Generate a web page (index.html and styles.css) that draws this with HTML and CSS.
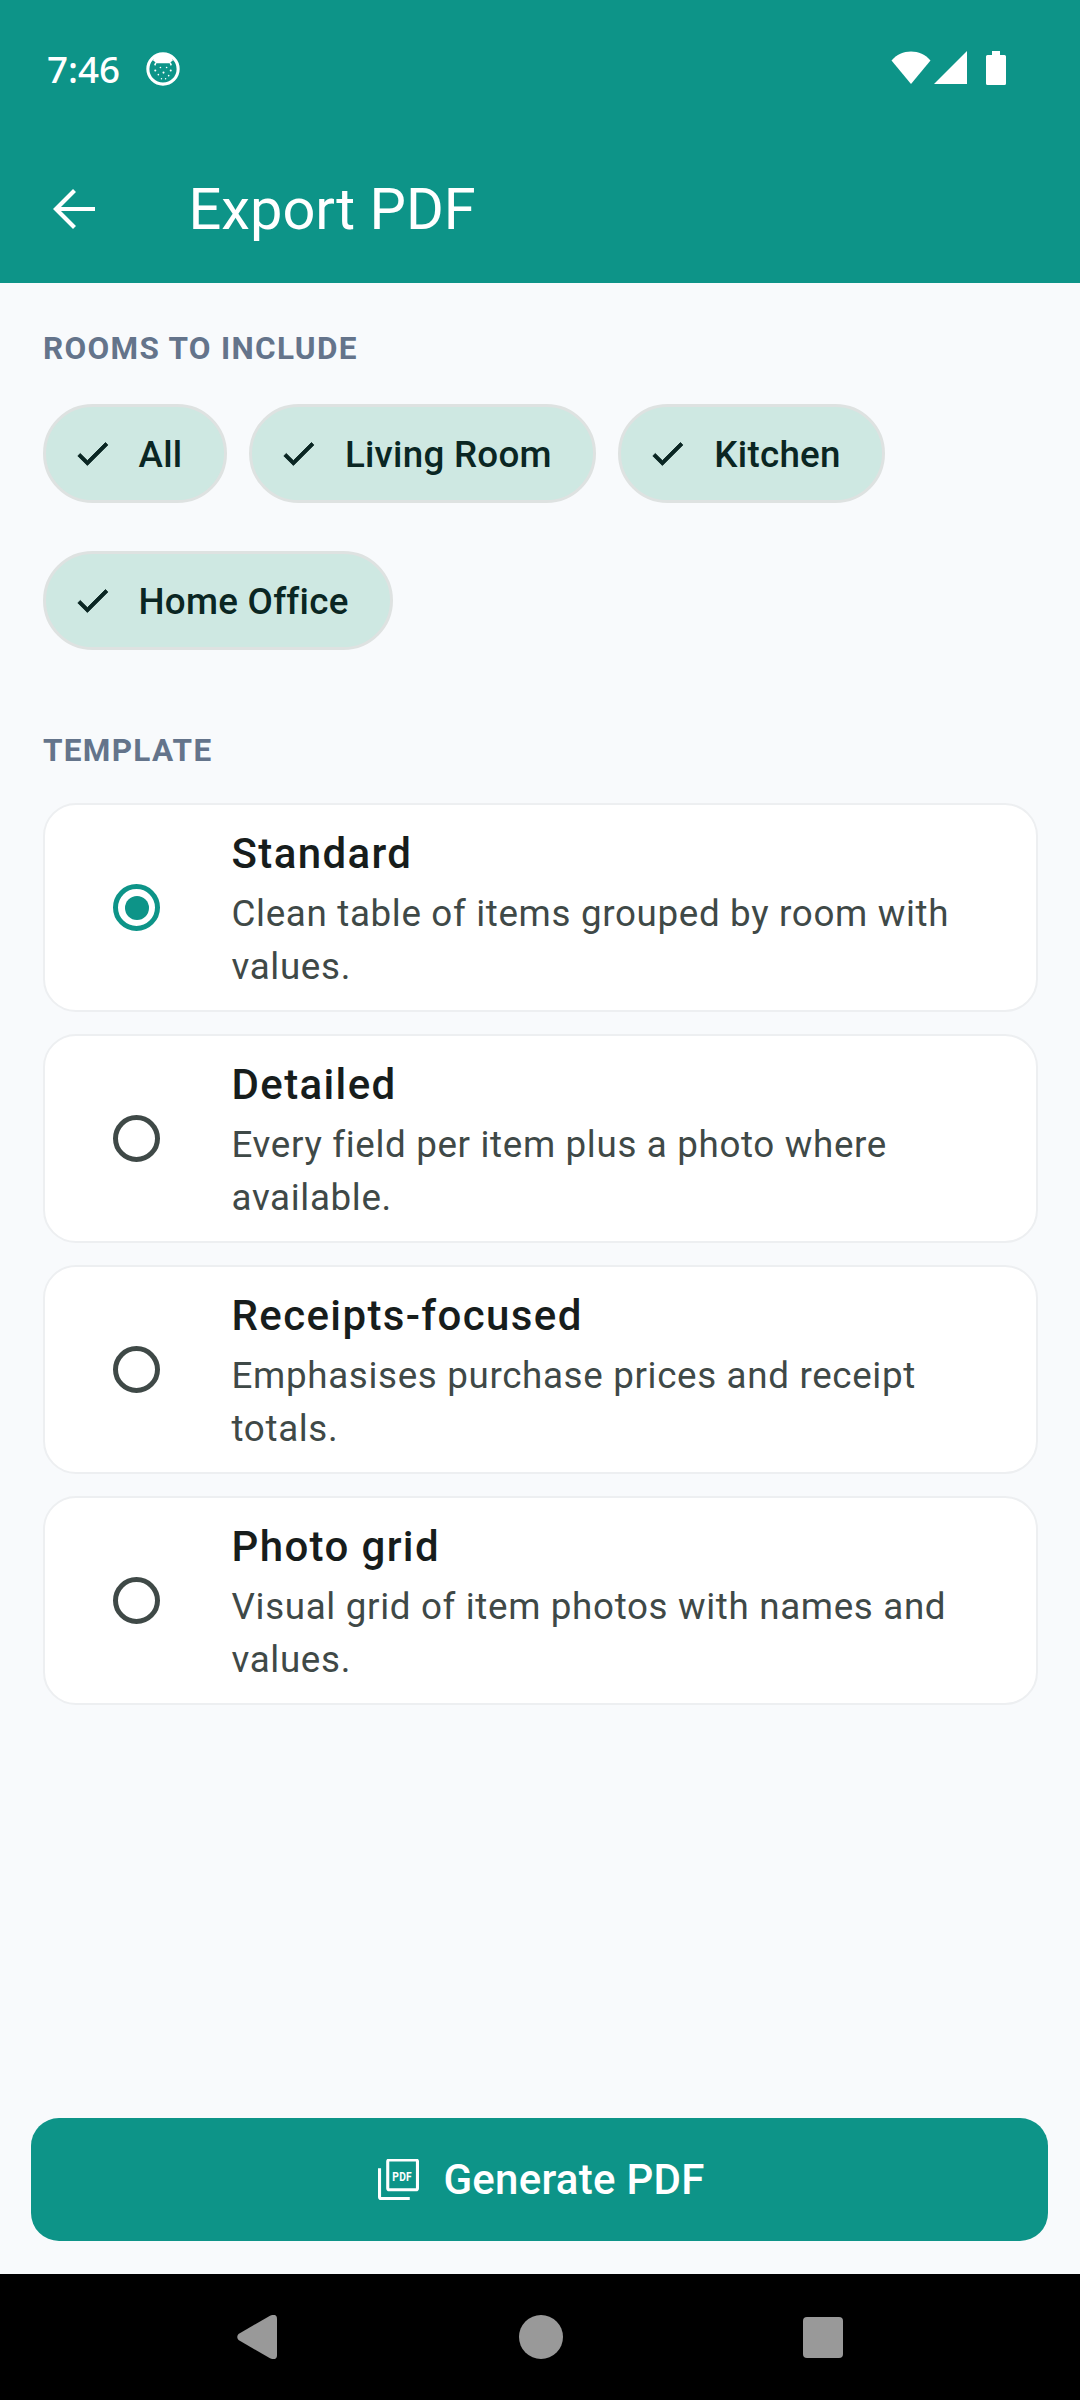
FILE: index.html
```html
<!DOCTYPE html>
<html lang="en">
<head>
<meta charset="utf-8">
<title>Export PDF</title>
<link rel="stylesheet" href="styles.css">
</head>
<body>
<div class="screen">
  <header class="header">
    <div class="status">
      <div class="status-left">
        <span class="time">7:46</span>
        <svg class="notif" viewBox="0 0 33 33"><circle cx="16.5" cy="16.5" r="14.7" fill="none" stroke="#fff" stroke-width="3"/><path d="M7 8.500c1.500.5 2.500 2.500 3.500 2.500h12c1 0 2-2 3.500-2.500 0-3-4-6.500-9.500-6.500S7 5.500 7 8.500z" fill="#fff"/><path d="M9.500 10.500l-1 2.500M23.500 10.500l1 2.500" stroke="#fff" stroke-width="1.500"/><g fill="#fff"><circle cx="9" cy="18" r="1"/><circle cx="14" cy="15" r=".8"/><circle cx="20" cy="15" r=".8"/><circle cx="24" cy="18" r="1"/><circle cx="12" cy="22" r=".8"/><circle cx="17" cy="20" r="1"/><circle cx="22" cy="23" r=".8"/><circle cx="15" cy="26" r=".7"/><circle cx="19" cy="26" r=".7"/></g></svg>
      </div>
      <div class="status-right">
        <svg class="wifi" viewBox="0 0 40 33"><path d="M0.500 9.500C5.500 3.500 12.500 0.500 20 0.500s14.500 3 19.500 9L20 33z" fill="#fff"/></svg>
        <svg class="signal" viewBox="0 0 33 33"><path d="M33 0v33H0z" fill="#fff"/></svg>
        <svg class="battery" viewBox="0 0 20 34"><path d="M6 0h8v4h4.500q1.500 0 1.500 1.500V32.500q0 1.500-1.500 1.500H1.500Q0 34 0 32.500V5.500Q0 4 1.500 4H6z" fill="#fff"/></svg>
      </div>
    </div>
    <div class="appbar">
      <svg class="back" viewBox="0 0 42 42"><path d="M42 21H3M21.500 2.500L3 21l18.500 18.500" fill="none" stroke="#fff" stroke-width="4.200"/></svg>
      <h1 class="title">Export PDF</h1>
    </div>
  </header>

  <main class="content">
    <h2 class="label">ROOMS TO INCLUDE</h2>
    <div class="chips">
      <div class="chip"><svg class="check" viewBox="0 0 24 24"><path d="M9 16.170L4.830 12l-1.420 1.410L9 19 21 7l-1.410-1.410z"/></svg><span class="chip-text">All</span></div>
      <div class="chip"><svg class="check" viewBox="0 0 24 24"><path d="M9 16.170L4.830 12l-1.420 1.410L9 19 21 7l-1.410-1.410z"/></svg><span class="chip-text">Living Room</span></div>
      <div class="chip"><svg class="check" viewBox="0 0 24 24"><path d="M9 16.170L4.830 12l-1.420 1.410L9 19 21 7l-1.410-1.410z"/></svg><span class="chip-text">Kitchen</span></div>
      <div class="chip"><svg class="check" viewBox="0 0 24 24"><path d="M9 16.170L4.830 12l-1.420 1.410L9 19 21 7l-1.410-1.410z"/></svg><span class="chip-text">Home Office</span></div>
    </div>

    <h2 class="label label-template">TEMPLATE</h2>
    <div class="cards">
      <div class="card">
        <div class="radio radio-on"><span class="dot"></span></div>
        <div class="card-text"><div class="card-title">Standard</div><div class="card-desc">Clean table of items grouped by room with values.</div></div>
      </div>
      <div class="card">
        <div class="radio"></div>
        <div class="card-text"><div class="card-title">Detailed</div><div class="card-desc">Every field per item plus a photo where available.</div></div>
      </div>
      <div class="card">
        <div class="radio"></div>
        <div class="card-text"><div class="card-title">Receipts-focused</div><div class="card-desc">Emphasises purchase prices and receipt totals.</div></div>
      </div>
      <div class="card">
        <div class="radio"></div>
        <div class="card-text"><div class="card-title">Photo grid</div><div class="card-desc">Visual grid of item photos with names and values.</div></div>
      </div>
    </div>
  </main>

  <div class="footer">
    <button class="generate">
      <svg class="pdf" viewBox="0 0 40 40"><path d="M9.500 2.500a1.500 1.500 0 0 1 1.500-1.500h26a1.500 1.500 0 0 1 1.500 1.500v26a1.500 1.500 0 0 1-1.500 1.500H11a1.500 1.500 0 0 1-1.500-1.500z" fill="none" stroke="#fff" stroke-width="3"/><path d="M1.500 9v28a1.500 1.500 0 0 0 1.500 1.500h28" fill="none" stroke="#fff" stroke-width="3"/><text x="14" y="21.700" class="pdf-text" textLength="19" lengthAdjust="spacingAndGlyphs">PDF</text></svg>
      <span>Generate PDF</span>
    </button>
  </div>

  <nav class="navbar">
    <svg class="nav-back" viewBox="0 0 40 44"><path d="M1.500 19L33 .7Q40-2 40 4V40Q40 46 33 43.300L1.500 25Q-1 22 1.500 19z" fill="#999"/></svg>
    <span class="nav-home"></span>
    <span class="nav-recent"></span>
  </nav>
</div>
</body>
</html>
```

FILE: styles.css
```css
* { box-sizing: border-box; }
html, body { margin: 0; padding: 0; }
body { font-family: Roboto, "Noto Sans", sans-serif; background: #F8FAFC; }
.screen { width: 1080px; height: 2400px; display: flex; flex-direction: column; background: #F8FAFC; overflow: hidden; }

.header { height: 283px; background: #0D9488; color: #fff; flex: none; }
.status { height: 138px; padding: 51px 74px 0 47px; display: flex; justify-content: space-between; align-items: flex-start; }
.status-left { display: flex; align-items: center; gap: 26px; height: 36px; }
.time { font-family: "Noto Sans", Roboto, sans-serif; font-size: 36.750px; font-weight: 500; line-height: 36px; }
.notif { width: 34px; height: 34px; }
.status-right { display: flex; align-items: flex-start; height: 34px; }
.wifi { width: 40px; height: 33px; }
.signal { width: 33px; height: 33px; margin-left: 3px; }
.battery { width: 20px; height: 34px; margin-left: 19px; }

.appbar { height: 145px; display: flex; align-items: flex-start; padding-left: 53px; }
.back { width: 42px; height: 42px; margin-top: 50px; flex: none; }
.title { margin: 38px 0 0 93.500px; font-size: 57.750px; font-weight: 400; line-height: 66px; }

.content { flex: 1; padding: 0 42px 0 43px; }
.label { margin: 0; font-size: 31.500px; font-weight: 700; letter-spacing: 1.310px; line-height: 40px; color: #64748B; padding-top: 46px; height: 85px; }

.chips { display: flex; flex-wrap: wrap; column-gap: 22px; row-gap: 48px; margin: 36px 0 0 -0.5px; }
.chip { height: 99px; border: 3px solid #DEE2E1; border-radius: 50px; background: #CEE8E2; display: flex; align-items: center; padding: 0 41.500px 0 26px; color: #0A2623; font-size: 36.750px; font-weight: 480; letter-spacing: 0.260px; }
.chip-text { margin-top: 2px; }
.check { width: 41px; height: 41px; fill: #0A2623; stroke: #0A2623; stroke-width: 0.5; margin-right: 26px; flex: none; }

.label-template { padding-top: 0; height: 40px; margin-top: 81px; }
.cards { display: flex; flex-direction: column; gap: 22px; margin-top: 32px; }
.card { height: 209px; width: 995px; background: #fff; border: 2.600px solid #EDEFF1; border-radius: 33px; display: flex; align-items: center; }
.radio { width: 47px; height: 47px; margin-left: 68px; border-radius: 50%; border: 5.500px solid #3F4947; display: flex; align-items: center; justify-content: center; flex: none; }
.radio-on { border-color: #0D9488; }
.dot { width: 24px; height: 24px; border-radius: 50%; background: #0D9488; }
.card-text { margin-left: 71.500px; flex: 1; padding-right: 60px; }
.card-title { font-size: 42px; font-weight: 550; letter-spacing: 1.370px; line-height: 63px; color: #171D1C; margin-bottom: 3px; }
.card-desc { font-size: 36.750px; font-weight: 400; letter-spacing: 0.660px; line-height: 52.500px; color: #3F4947; }

.footer { flex: none; padding: 0 31px 33px; }
.generate { width: 1017px; height: 123px; border: 0; border-radius: 28px; background: #0D9488; color: #fff; display: flex; align-items: center; justify-content: center; gap: 24px; font-family: Roboto, sans-serif; font-size: 42px; font-weight: 500; letter-spacing: 0.260px; padding: 0 0 0 4px; }
.pdf { width: 41px; height: 41px; flex: none; }
.pdf-text { font-family: Roboto, sans-serif; font-size: 12.500px; font-weight: 700; fill: #fff; }

.navbar { height: 126px; background: #000; flex: none; position: relative; }
.nav-back { position: absolute; left: 237px; top: 41px; width: 40px; height: 44px; }
.nav-home { position: absolute; left: 519px; top: 41px; width: 44px; height: 44px; border-radius: 50%; background: #999; }
.nav-recent { position: absolute; left: 803px; top: 43px; width: 40px; height: 41px; border-radius: 4px; background: #999; }
```
